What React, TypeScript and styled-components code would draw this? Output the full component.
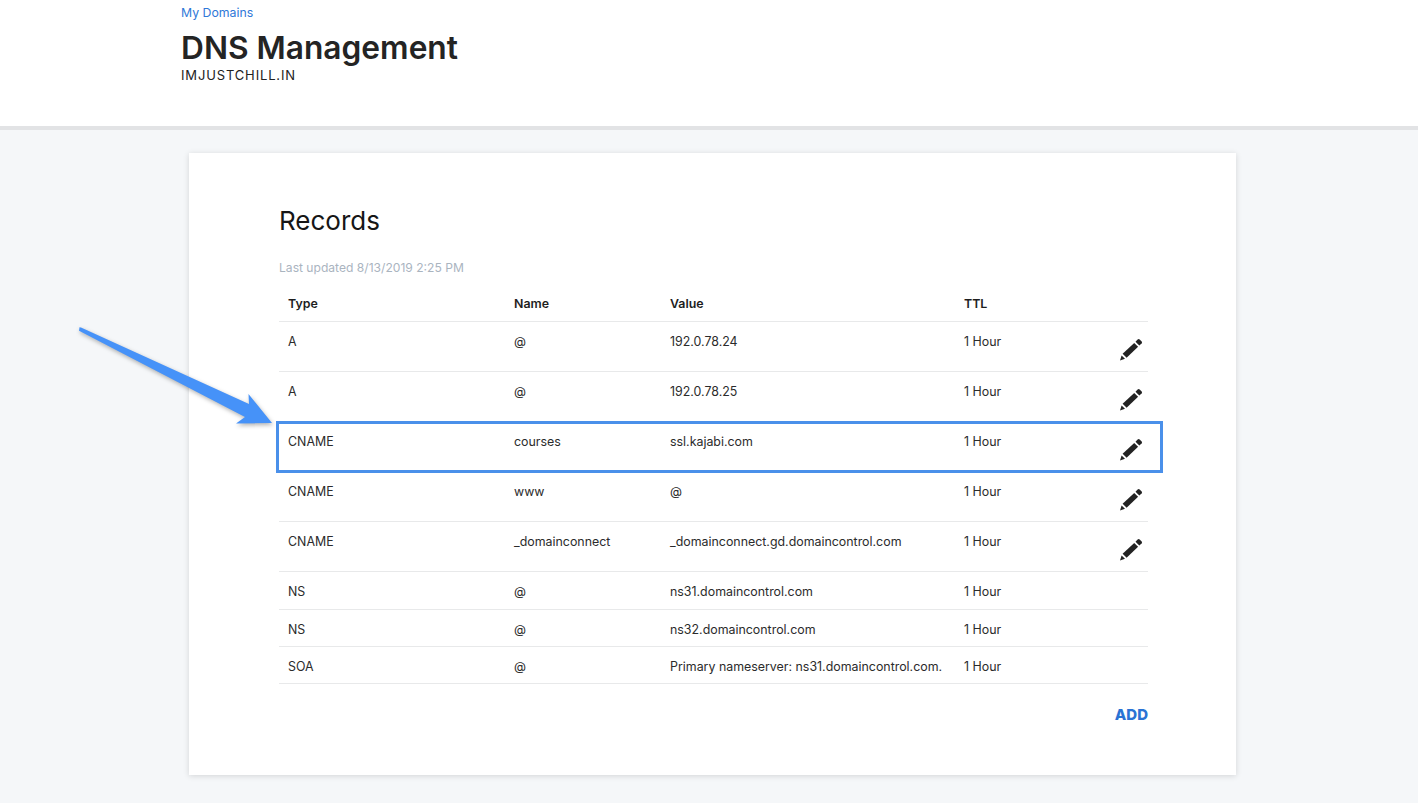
import React from "react";
import styled, { createGlobalStyle } from "styled-components";

const Global = createGlobalStyle`
  html, body { margin: 0; padding: 0; background: #f5f7f9; }
  body { font-family: "Inter", "Liberation Sans", sans-serif; color: #1f1f1f; }
`;

const Page = styled.div`
  position: relative;
  width: 1418px;
  height: 803px;
  overflow: hidden;
  background: #f5f7f9;
`;

const Header = styled.header`
  box-sizing: border-box;
  height: 130px;
  padding: 5px 0 0 181px;
  background: #fff;
  border-bottom: 4px solid #e2e3e5;
`;

const Crumb = styled.a`
  display: block;
  font-size: 12.3px;
  line-height: 16px;
  color: #2f78d8;
`;

const Title = styled.h1`
  margin: 8px 0 0;
  font-size: 31.7px;
  line-height: 38px;
  font-weight: 600;
  color: #242424;
`;

const Domain = styled.div`
  font-size: 13px;
  line-height: 16px;
  letter-spacing: 0.85px;
  color: #222;
`;

const Card = styled.section`
  box-sizing: border-box;
  width: 1047px;
  height: 622px;
  margin: 23px 0 0 189px;
  padding: 49px 88px 0 90px;
  background: #fff;
  box-shadow: 0 1px 6px rgba(0, 0, 0, 0.14);
`;

const Heading = styled.h2`
  margin: 0;
  font-size: 26px;
  line-height: 37px;
  font-weight: 400;
  color: #161616;
`;

const Updated = styled.div`
  margin-top: 21px;
  font-size: 12.1px;
  line-height: 16px;
  color: #aab4bf;
`;

const Row = styled.div<{ $h: number; $head?: boolean }>`
  position: relative;
  box-sizing: border-box;
  display: grid;
  grid-template-columns: 226px 156px 294px 1fr 29px;
  height: ${(p) => p.$h}px;
  padding-left: 9px;
  border-bottom: 1px solid #e8e9ea;
  font-size: 12.4px;
  line-height: 16px;
  font-weight: ${(p) => (p.$head ? 600 : 400)};
  color: ${(p) => (p.$head ? "#1e1e1e" : "#2b2b2b")};
`;

const Cell = styled.div<{ $top: number }>`
  padding-top: ${(p) => p.$top}px;
  white-space: nowrap;
`;

const EditSlot = styled.div`
  padding-top: 15px;
  line-height: 0;
`;

const Highlight = styled.div`
  position: absolute;
  left: -3px;
  right: -15px;
  top: -1px;
  bottom: -2px;
  border: 3px solid #4a90ea;
  pointer-events: none;
`;

const Footer = styled.div`
  display: flex;
  justify-content: flex-end;
  padding-top: 23px;
`;

const AddButton = styled.button`
  padding: 0;
  border: 0;
  background: none;
  font: 800 15px/16px "Inter", "Liberation Sans", sans-serif;
  color: #2a73d4;
`;

const ArrowArt = styled.svg`
  position: absolute;
  left: 70px;
  top: 315px;
  width: 220px;
  height: 120px;
  overflow: visible;
  filter: drop-shadow(1px 2px 2px rgba(0, 0, 0, 0.3));
`;

const Pencil = () => (
  <svg width="24" height="24" viewBox="0 0 24 24" fill="#232323">
    <path d="M1 23.5 L2.6 18.4 L6 21.8 Z" />
    <path d="M3.6 16.8 L15.2 5.9 L19.1 9.8 L7.6 20.8 Z" />
    <path d="M16.5 4.7 L18.6 2.5 Q19.6 1.6 20.7 2.5 L22.7 4.4 Q23.5 5.4 22.6 6.5 L20.3 8.6 Z" />
  </svg>
);

type Rec = [string, string, string, boolean, boolean?];
const records: Rec[] = [
  ["A", "@", "192.0.78.24", true],
  ["A", "@", "192.0.78.25", true],
  ["CNAME", "courses", "ssl.kajabi.com", true, true],
  ["CNAME", "www", "@", true],
  ["CNAME", "_domainconnect", "_domainconnect.gd.domaincontrol.com", true],
  ["NS", "@", "ns31.domaincontrol.com", false],
  ["NS", "@", "ns32.domaincontrol.com", false],
  ["SOA", "@", "Primary nameserver: ns31.domaincontrol.com.", false],
];

export default function App() {
  return (
    <Page>
      <Global />
      <Header>
        <Crumb>My Domains</Crumb>
        <Title>DNS Management</Title>
        <Domain>IMJUSTCHILL.IN</Domain>
      </Header>
      <Card>
        <Heading>Records</Heading>
        <Updated>Last updated 8/13/2019 2:25 PM</Updated>
        <Row $h={46} $head>
          <Cell $top={20}>Type</Cell>
          <Cell $top={20}>Name</Cell>
          <Cell $top={20}>Value</Cell>
          <Cell $top={20}>TTL</Cell>
        </Row>
        {records.map(([type, name, value, editable, hi], i) => (
          <Row key={i} $h={editable ? 50 : i === 5 ? 38 : 37}>
            <Cell $top={12}>{type}</Cell>
            <Cell $top={12}>{name}</Cell>
            <Cell $top={12}>{value}</Cell>
            <Cell $top={12}>1 Hour</Cell>
            {editable && (
              <EditSlot>
                <Pencil />
              </EditSlot>
            )}
            {hi && <Highlight />}
          </Row>
        ))}
        <Footer>
          <AddButton>ADD</AddButton>
        </Footer>
      </Card>
      <ArrowArt viewBox="0 0 220 120">
        <path d="M9.5 12.3 L11 12.6 L179 89 L178.5 79 L202 108 L166 108.5 L175 102 L9 15.8 Z" fill="#4692f8" />
      </ArrowArt>
    </Page>
  );
}
